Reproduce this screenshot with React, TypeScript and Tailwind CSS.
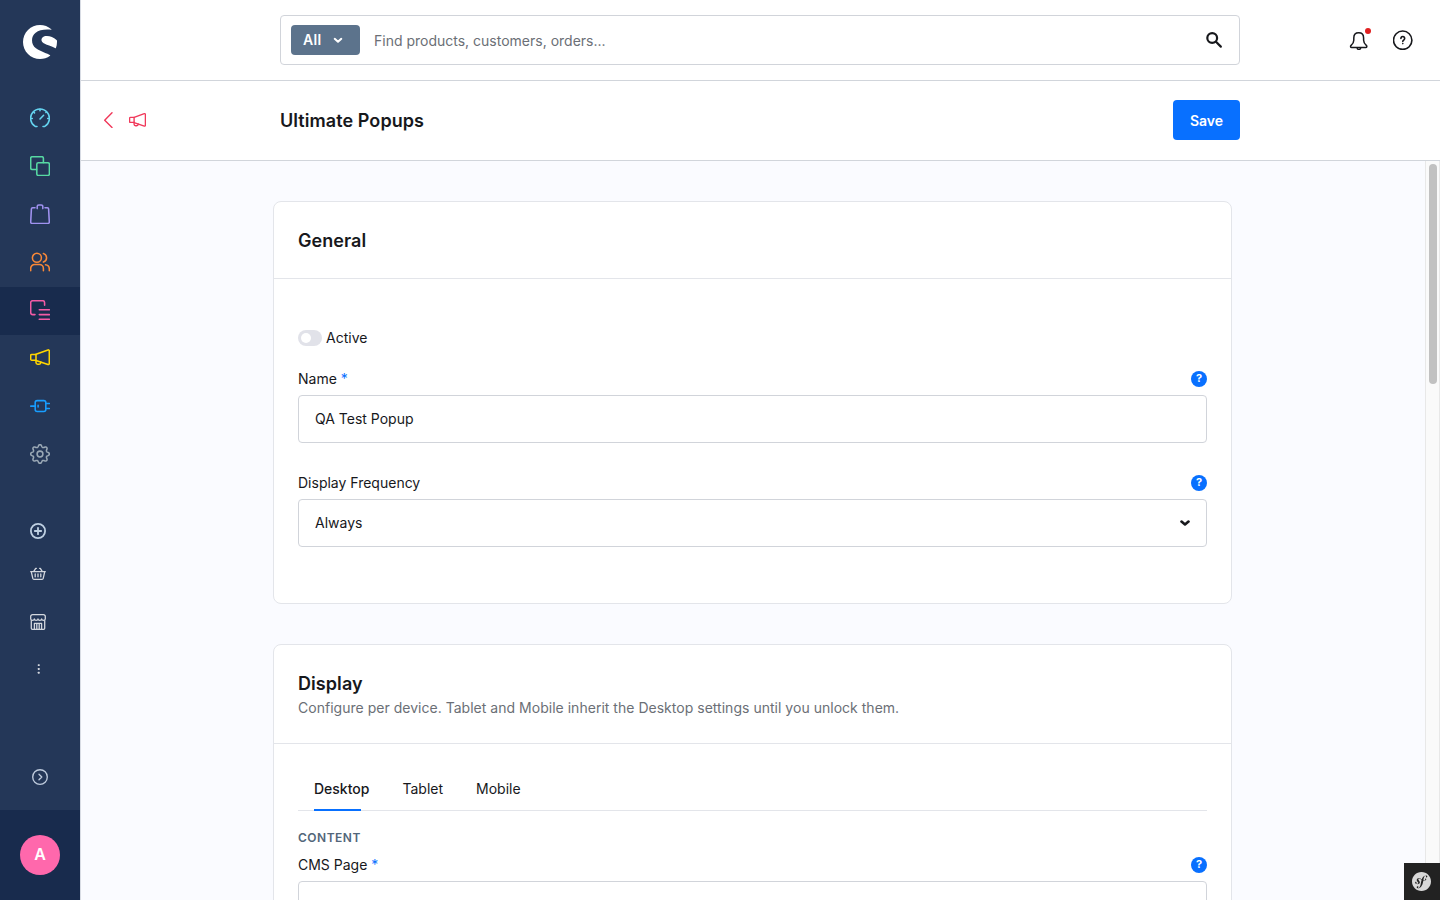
import React, { useState } from 'react';
import { SiShopware, SiSymfony } from 'react-icons/si';

// Stroke icon on a 20px grid, shared by the sidebar entries
const Icon = ({ children, size = 20, box = 20, width = 1.55, className = '' }: {
  children: React.ReactNode;
  size?: number;
  box?: number;
  width?: number;
  className?: string;
}) => (
  <svg
    width={size}
    height={size}
    viewBox={`0 0 ${box} ${box}`}
    fill="none"
    stroke="currentColor"
    strokeWidth={width}
    strokeLinecap="round"
    strokeLinejoin="round"
    className={`block shrink-0 ${className}`}
  >
    {children}
  </svg>
);

const Megaphone = () => (
  <>
    <path d="M6 6.3 18 1.9a1 1 0 0 1 1.300.9V15.600a1 1 0 0 1-1.300.9L6 12.400z" />
    <path d="M6 6.400H1.700a1 1 0 0 0-1 1v3.800a1 1 0 0 0 1 1H6" />
    <path d="M6 12.400v2.100a1.700 1.700 0 0 0 1.700 1.700h1.400a1.700 1.700 0 0 0 1.700-1.700v-.4" />
  </>
);

// Eight rounded teeth around the center of the 20px grid
const gearPath = Array.from({ length: 128 }, (_, i) => {
  const angle = (i / 128) * Math.PI * 2;
  const wave = Math.cos(angle * 8);
  const r = 8.2 + 1.15 * Math.sign(wave) * Math.pow(Math.abs(wave), 0.7);
  return `${i ? 'L' : 'M'}${(10 + r * Math.cos(angle)).toFixed(2)} ${(10 + r * Math.sin(angle)).toFixed(2)}`;
}).join('') + 'Z';

const mainMenu = [
  {
    id: 'dashboard',
    color: 'text-[#65d4f0]',
    icon: (
      <>
        <path d="M7 18.400H5.200a9.400 9.400 0 1 1 9.600 0H13" />
        <path d="m10 11 3.600-3.800M10 1.200v1.500M.8 10.400h1.500M17.700 10.400h1.500M3.600 4l.9.9M16.400 4l-.5.5" />
      </>
    ),
  },
  {
    id: 'catalogues',
    color: 'text-[#57d9a3]',
    icon: (
      <>
        <rect x="6.800" y="6.800" width="12.600" height="12.600" rx="1.500" />
        <path d="M6.600 13.400H2.200A1.500 1.500 0 0 1 .7 11.900V2.200A1.500 1.500 0 0 1 2.200.7h9.700a1.500 1.500 0 0 1 1.500 1.500v4.400" />
      </>
    ),
  },
  {
    id: 'orders',
    color: 'text-[#a092f0]',
    icon: (
      <>
        <path d="M5 3.800H2.600a1.200 1.200 0 0 0-1.200 1.100L.7 18a1.400 1.400 0 0 0 1.400 1.500h15.800a1.400 1.400 0 0 0 1.400-1.500l-.7-13.100a1.200 1.200 0 0 0-1.200-1.100H15" />
        <path d="M7.200 4.600V2.500A1.600 1.600 0 0 1 8.800.9h2.400a1.600 1.600 0 0 1 1.600 1.600v2.100" />
      </>
    ),
  },
  {
    id: 'customers',
    color: 'text-[#f88838]',
    icon: (
      <>
        <circle cx="6.900" cy="5.800" r="4.500" />
        <path d="M.7 18.700v-2.200a4 4 0 0 1 4-4h4.700a4 4 0 0 1 4 4v2.200" />
        <path d="M13.400 1.500a4.500 4.500 0 0 1 0 8.600M15.500 12.800a4.300 4.300 0 0 1 3.800 4.200v1.700" />
      </>
    ),
  },
  {
    id: 'content',
    color: 'text-[#f25ba5]',
    icon: (
      <>
        <path d="M5 14.600H2.700a2 2 0 0 1-2-2V2.700a2 2 0 0 1 2-2h9.900a2 2 0 0 1 2 2v2.600" />
        <path d="M9.300 9.700h10.100M9.300 14.600h10.100M9.300 19.300h10.100" />
      </>
    ),
  },
  { id: 'marketing', color: 'text-[#ffd500]', icon: <Megaphone /> },
  {
    id: 'extensions',
    color: 'text-[#189eff]',
    icon: (
      <>
        <path d="M.7 10.100h4.500M15.700 7.500h3.600M15.700 12.500h3.600M8.100 9.300v1.600" />
        <path d="M7.200 4.600h6.600a2 2 0 0 1 2 2v6.900a2 2 0 0 1-2 2H7.200a2 2 0 0 1-2-2V6.600a2 2 0 0 1 2-2z" />
      </>
    ),
  },
  {
    id: 'settings',
    color: 'text-[#9aa8b5]',
    icon: (
      <>
        <circle cx="10" cy="10" r="2.900" />
        <path d={gearPath} />
      </>
    ),
  },
];

const Sidebar = () => (
  <aside className="flex w-20 shrink-0 flex-col bg-[#243758]">
    <div className="flex h-[95px] justify-center pt-[25px]">
      <SiShopware size={34} className="text-white" />
    </div>

    <nav className="flex flex-col">
      {mainMenu.map((item) => (
        <a
          key={item.id}
          href="#"
          aria-label={item.id}
          className={`flex h-12 items-center justify-center pb-0.5 ${item.color} ${item.id === 'content' ? 'bg-[#182b4d]' : ''}`}
        >
          <Icon>{item.icon}</Icon>
        </a>
      ))}
    </nav>

    <div className="mt-11 flex flex-col pl-[30px] text-[#d3d7de]">
      <Icon size={16} box={16} width={1.8} className="text-[#bfd0e2]">
        <circle cx="8" cy="8" r="7.100" />
        <path d="M8 4.800v6.400M4.800 8h6.400" />
      </Icon>
      <Icon size={16} box={16} width={1.3} className="mt-[27px]">
        <path d="M.7 5.600h14.600M1.300 5.800l1.500 6.600a1.200 1.200 0 0 0 1.200.9h8a1.200 1.200 0 0 0 1.200-.9l1.500-6.600M6.400 2.300H5.700L3.800 5.400M9.600 2.300h.7l1.900 3.100M5.200 8v2.800M8 8v2.800M10.800 8v2.800" />
      </Icon>
      <Icon size={16} box={16} width={1.3} className="mt-8">
        <path d="M1.300 6.600v7.600a1.100 1.100 0 0 0 1.100 1.100h11.200a1.100 1.100 0 0 0 1.100-1.100V6.600" />
        <path d="M.7 5V2.500A1.800 1.800 0 0 1 2.500.7h11a1.800 1.800 0 0 1 1.800 1.800V5a1.830 1.400 0 0 1-3.650 0 1.830 1.400 0 0 1-3.650 0 1.830 1.400 0 0 1-3.650 0A1.830 1.400 0 0 1 .7 5z" />
        <path d="M4.400 15V9.400h7.200V15M6.800 9.600V15M9.200 9.600V15" />
      </Icon>
      <svg width="16" height="16" viewBox="0 0 16 16" fill="currentColor" className="mt-8 block">
        <rect x="7.800" y="2.200" width="1.900" height="1.900" rx=".4" />
        <rect x="7.800" y="6" width="1.900" height="1.900" rx=".4" />
        <rect x="7.800" y="9.800" width="1.900" height="1.900" rx=".4" />
      </svg>
    </div>

    <div className="mt-auto flex justify-center pb-[25px] text-[#bfcbdd]">
      <Icon size={16} box={16} width={1.35}>
        <circle cx="8" cy="8" r="7.300" />
        <path d="m7 5.200 2.800 2.800L7 10.800" />
      </Icon>
    </div>
    <div className="flex h-[90px] items-center justify-center bg-[#182b4d]">
      <div className="flex h-10 w-10 items-center justify-center rounded-full bg-[#ff68ac] pb-0.5 text-base font-semibold text-white">
        A
      </div>
    </div>
  </aside>
);

const TopBar = () => (
  <header className="flex h-[81px] shrink-0 border-b border-[#d1d5db] bg-white pl-[199px]">
    <div className="mt-[15px] flex h-[50px] w-[960px] items-center rounded border border-[#d1d4da] pl-2.5">
      <button className="flex h-[30px] w-[69px] items-center rounded bg-[#5c738c] pl-3 text-sm font-semibold tracking-[0.3px] text-white">
        All
        <Icon size={10} box={10} width={2} className="ml-3">
          <path d="m1.700 3.800 3.300 3 3.300-3" />
        </Icon>
      </button>
      <span className="ml-3.5 pt-px text-sm text-[#6b6f76]">Find products, customers, orders...</span>
      <Icon size={16} box={16} width={2.2} className="ml-auto mr-[17px] text-[#17181c]">
        <circle cx="6.200" cy="6" r="4.900" />
        <path d="m10 9.800 4.800 4.800" />
      </Icon>
    </div>
    <div className="ml-[109px] mt-[30px] flex">
      <div className="relative">
        <Icon width={1.5} className="text-[#17181c]">
          <path d="M9.700 2.700c-3 0-4.900 2.200-4.900 5.200v2.400c0 2.300-.8 3.400-2.700 5.100-1 .9-.6 2.100.6 2.100h14c1.200 0 1.600-1.200.6-2.100-1.900-1.700-2.700-2.800-2.700-5.100V7.900c0-3-1.900-5.200-4.900-5.200z" />
          <path d="M8.200 17.900a1.700 1.500 0 0 0 3.400 0" />
        </Icon>
        <span className="absolute -top-0.5 left-4 h-1.5 w-1.5 rounded-full bg-[#e02020]" />
      </div>
      <Icon width={1.6} className="ml-6 text-[#17181c]">
        <circle cx="9.700" cy="10.200" r="9.200" />
        <path d="M7.900 8.400a1.900 1.900 0 1 1 2.900 1.600c-.7.400-1 .7-1 1.400" />
        <path d="M9.800 13.500v.1" />
      </Icon>
    </div>
  </header>
);

const PageHeader = () => (
  <div className="flex h-20 shrink-0 border-b border-[#d1d5db] bg-white pl-[22px]">
    <div className="flex w-[177px] items-center pb-px text-[#f0385a]">
      <Icon size={16} box={16} width={1.4} className="-ml-[3px]">
        <path d="M12 .8 4.700 8.200l7.300 7.200" />
      </Icon>
      <Icon size={17} width={1.6} className="ml-[13px]">
        <Megaphone />
      </Icon>
    </div>
    <h1 className="flex w-[893px] items-center text-lg font-semibold tracking-[0.07px] text-[#17181c]">Ultimate Popups</h1>
    <button className="mt-[19px] h-10 w-[67px] rounded bg-[#0870ff] pt-px text-sm font-semibold text-white">Save</button>
  </div>
);

const HelpBadge = () => (
  <span className="flex h-4 w-4 items-center justify-center rounded-full bg-[#0870ff] text-[11px] font-bold text-white">
    ?
  </span>
);

const Label = ({ text, required = false }: { text: string; required?: boolean }) => (
  <div className="flex h-4 items-center justify-between text-sm text-[#17181c]">
    <span>
      {text} {required && <span className="text-[#0870ff]">*</span>}
    </span>
    <HelpBadge />
  </div>
);

const tabs = ['Desktop', 'Tablet', 'Mobile'];

export default function App() {
  const [activeTab, setActiveTab] = useState('Desktop');

  return (
    <div className="flex h-screen overflow-hidden bg-[#fafbff] font-['Inter',sans-serif] text-[#17181c] antialiased">
      <Sidebar />

      <div className="flex min-w-0 flex-1 flex-col border-l border-[#d8dce4]">
        <TopBar />
        <PageHeader />

        <div className="flex min-h-0 flex-1">
          <main className="min-w-0 flex-1 overflow-hidden pl-48 pt-10">
            <section className="h-[403px] w-[959px] rounded-lg border border-[#e3e5ea] bg-white">
              <div className="flex h-[77px] items-center border-b border-[#e3e5ea] px-6 pt-0.5">
                <h2 className="text-lg font-semibold tracking-[0.07px]">General</h2>
              </div>
              <div className="flex flex-col px-6 pt-[51px]">
                <div className="flex h-4 items-center">
                  <span className="flex h-4 w-6 items-center rounded-full bg-[#e1e2e9] pl-[3px]">
                    <span className="h-2.5 w-2.5 rounded-full bg-white" />
                  </span>
                  <span className="ml-1 text-sm">Active</span>
                </div>
                <div className="mt-[25px]">
                  <Label text="Name" required />
                  <div className="mt-2 flex h-12 items-center rounded border border-[#d1d4da] px-4 text-sm">
                    QA Test Popup
                  </div>
                </div>
                <div className="mt-8">
                  <Label text="Display Frequency" />
                  <div className="mt-2 flex h-12 items-center justify-between rounded border border-[#d1d4da] px-4 text-sm">
                    Always
                    <Icon size={10} box={10} width={2.6}>
                      <path d="M1.500 3.600 5 6.500l3.500-2.900" />
                    </Icon>
                  </div>
                </div>
              </div>
            </section>

            <section className="mt-10 h-[403px] w-[959px] rounded-lg border border-[#e3e5ea] bg-white">
              <div className="flex h-[99px] flex-col border-b border-[#e3e5ea] px-6 pt-[25px]">
                <h2 className="text-lg font-semibold leading-[27px] tracking-[0.07px]">Display</h2>
                <p className="text-sm leading-[22px] tracking-[0.02px] text-[#6b6f76]">
                  Configure per device. Tablet and Mobile inherit the Desktop settings until you unlock them.
                </p>
              </div>
              <div className="px-6 pt-6">
                <div className="flex h-[43px] gap-[33px] border-b border-[#e3e5ea] pl-4">
                  {tabs.map((tab) => (
                    <button
                      key={tab}
                      onClick={() => setActiveTab(tab)}
                      className={`relative h-[43px] pb-[1px] text-sm ${activeTab === tab ? 'font-medium' : ''}`}
                    >
                      {tab}
                      {activeTab === tab && <span className="absolute bottom-0 left-0 h-0.5 w-[47px] bg-[#0870ff]" />}
                    </button>
                  ))}
                </div>
                <h3 className="mt-[19px] text-xs font-semibold leading-4 tracking-[0.5px] text-[#52667a]">CONTENT</h3>
                <div className="mt-[11px]">
                  <Label text="CMS Page" required />
                  <div className="mt-2 h-12 rounded border border-[#d1d4da]" />
                </div>
              </div>
            </section>
          </main>

          <div className="flex w-[15px] shrink-0 justify-center border-l border-r border-[#e8e8e8] bg-[#fafafa] pt-[3px]">
            <div className="h-[220px] w-2 rounded-full bg-[#c1c1c1]" />
          </div>
        </div>
      </div>

      {/* debug toolbar toggle */}
      <button className="fixed bottom-0 right-0 flex h-[37px] w-9 items-center justify-center bg-[#222] pr-0.5" aria-label="Symfony">
        <SiSymfony size={19} className="text-[#d8d8d8]" />
      </button>
    </div>
  );
}
